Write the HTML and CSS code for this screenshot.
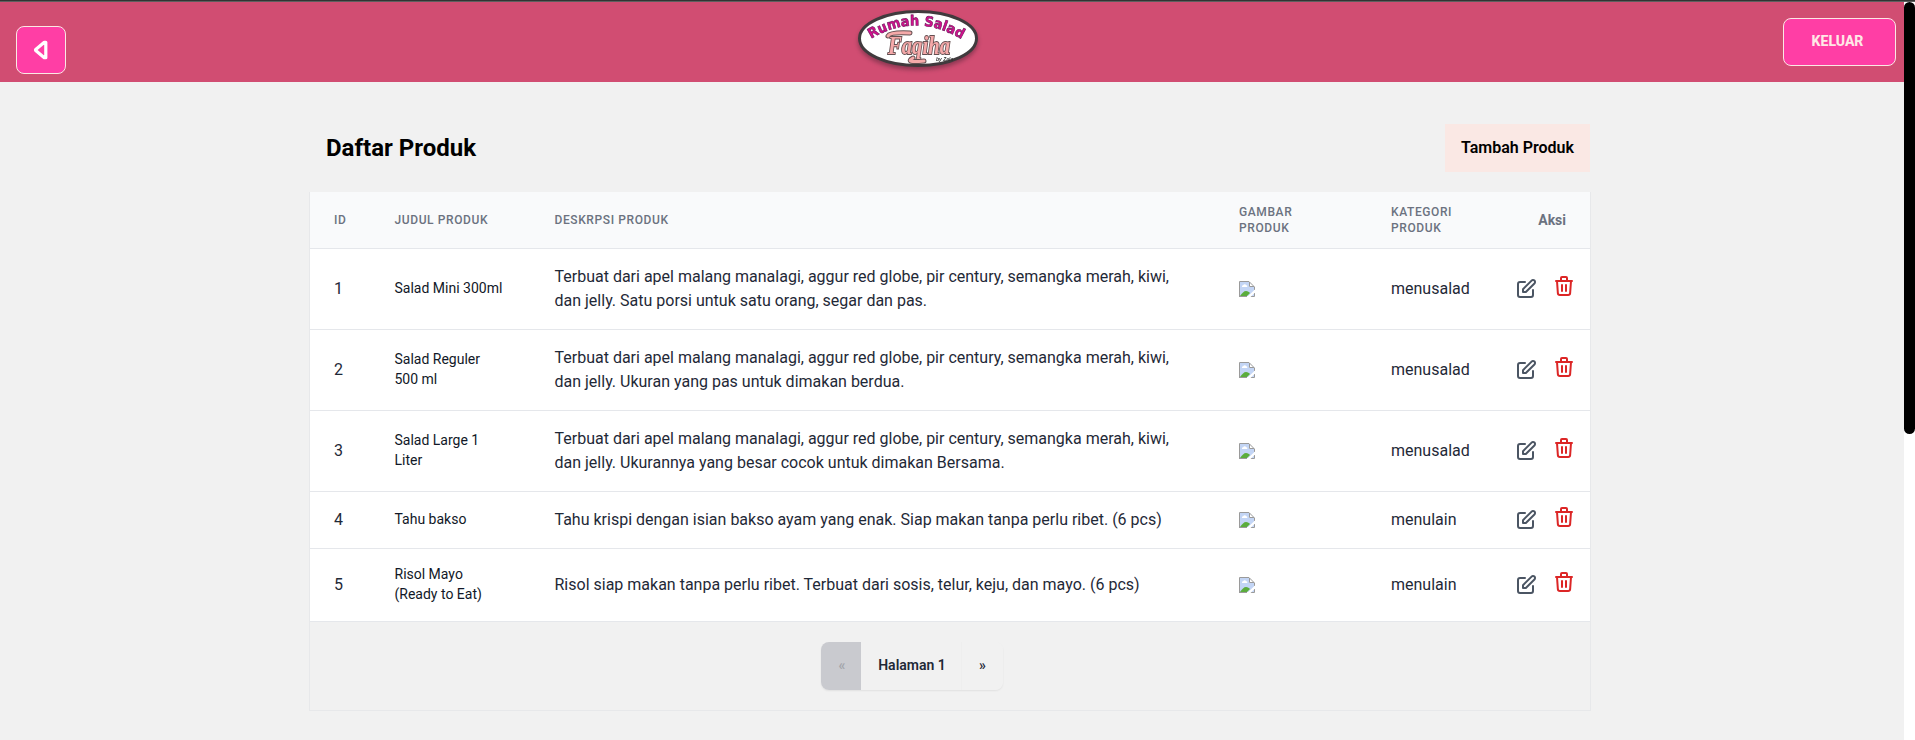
FILE: index.html
```html
<!DOCTYPE html>
<html lang="id">
<head>
<meta charset="utf-8">
<title>Daftar Produk</title>
<link rel="stylesheet" href="styles.css">
</head>
<body>
<svg class="defs" width="0" height="0" aria-hidden="true">
  <symbol id="edit" viewBox="0 0 24 24"><path fill="none" stroke="currentColor" stroke-width="2" stroke-linecap="round" stroke-linejoin="round" d="M11 5H6a2 2 0 00-2 2v11a2 2 0 002 2h11a2 2 0 002-2v-5m-1.414-9.414a2 2 0 112.828 2.828L11.828 15H9v-2.828l8.586-8.586z"/></symbol>
  <symbol id="trash" viewBox="0 0 24 24"><path fill="none" stroke="currentColor" stroke-width="2" stroke-linecap="round" stroke-linejoin="round" d="M19 7l-.867 12.142A2 2 0 0116.138 21H7.862a2 2 0 01-1.995-1.858L5 7m5 4v6m4-6v6m1-10V4a1 1 0 00-1-1h-4a1 1 0 00-1 1v3M4 7h16"/></symbol>
  <symbol id="broken" viewBox="0 0 16 16">
    <path fill="#c3d5f5" d="M1 1h9v5h5v9H1z"/>
    <path fill="#fff" d="M3 5.5a1.3 1.3 0 011.2-1.3 1.6 1.6 0 013 0A1 1 0 018 6H3z"/>
    <path fill="#5bad3c" d="M1 15c2-3 4-5 6-5s3 1 4 2l-3 3z"/>
    <path fill="#fff" d="M10 1l5 5h-5z"/>
    <path fill="none" stroke="#9a9a9a" d="M.5 16V.5H10l5.500 5.500v3M10.500 1v4.500H15M0 15.500h8M11 15.500h4.500V12"/>
    <path fill="#fff" d="M16 8.500v3L11.500 16H8z"/>
  </symbol>
</svg>
<div class="window">
  <div class="page">
    <header class="navbar">
      <button class="btn-pink back" aria-label="Kembali">
        <svg width="16" height="20" viewBox="0 0 16 20"><path fill="none" stroke="#fff" stroke-width="3.200" stroke-linejoin="round" d="M12.300 2.300 11.300 2.300 3 9.200Q2.200 10 3 10.800L11.300 17.700 12.800 17.700V2.300z"/></svg>
      </button>
      <svg class="logo" width="140" height="80" viewBox="0 0 140 80">
        <ellipse cx="70" cy="37.500" rx="58.500" ry="27" fill="#fff" stroke="#403a3d" stroke-width="3"/>
        <path id="arc" fill="none" d="M23 38Q68 10 117 40"/>
        <text class="logo-top"><textPath href="#arc" textLength="96" lengthAdjust="spacingAndGlyphs">Rumah Salad</textPath></text>
        <path d="M40 35Q42 31 62 32" class="logo-swash outline"/>
        <path d="M65 57Q56 62 76 60" class="logo-swash outline"/>
        <text class="logo-name" x="40" y="53" textLength="62" lengthAdjust="spacingAndGlyphs">Faqiha</text>
        <path d="M40 35Q42 31 62 32" class="logo-swash"/>
        <path d="M65 57Q56 62 76 60" class="logo-swash"/>
        <text class="logo-by" x="88" y="60">by Zala</text>
      </svg>
      <button class="btn-pink logout">KELUAR</button>
    </header>
    <main class="content">
      <div class="heading">
        <h1>Daftar Produk</h1>
        <button class="add">Tambah Produk</button>
      </div>
      <section class="card">
        <div class="row head">
          <div>ID</div><div>Judul Produk</div><div>Deskrpsi Produk</div><div>Gambar<br>Produk</div><div>Kategori<br>Produk</div><div class="aksi">Aksi</div>
        </div>
        <div class="row">
          <div>1</div><div class="name">Salad Mini 300ml</div>
          <div>Terbuat dari apel malang manalagi, aggur red globe, pir century, semangka merah, kiwi,<br>dan jelly. Satu porsi untuk satu orang, segar dan pas.</div>
          <div><svg class="img"><use href="#broken"/></svg></div><div>menusalad</div>
          <div class="actions"><svg class="edit"><use href="#edit"/></svg><svg class="trash"><use href="#trash"/></svg></div>
        </div>
        <div class="row">
          <div>2</div><div class="name">Salad Reguler<br>500 ml</div>
          <div>Terbuat dari apel malang manalagi, aggur red globe, pir century, semangka merah, kiwi,<br>dan jelly. Ukuran yang pas untuk dimakan berdua.</div>
          <div><svg class="img"><use href="#broken"/></svg></div><div>menusalad</div>
          <div class="actions"><svg class="edit"><use href="#edit"/></svg><svg class="trash"><use href="#trash"/></svg></div>
        </div>
        <div class="row">
          <div>3</div><div class="name">Salad Large 1<br>Liter</div>
          <div>Terbuat dari apel malang manalagi, aggur red globe, pir century, semangka merah, kiwi,<br>dan jelly. Ukurannya yang besar cocok untuk dimakan Bersama.</div>
          <div><svg class="img"><use href="#broken"/></svg></div><div>menusalad</div>
          <div class="actions"><svg class="edit"><use href="#edit"/></svg><svg class="trash"><use href="#trash"/></svg></div>
        </div>
        <div class="row">
          <div>4</div><div class="name">Tahu bakso</div>
          <div>Tahu krispi dengan isian bakso ayam yang enak. Siap makan tanpa perlu ribet. (6 pcs)</div>
          <div><svg class="img"><use href="#broken"/></svg></div><div>menulain</div>
          <div class="actions"><svg class="edit"><use href="#edit"/></svg><svg class="trash"><use href="#trash"/></svg></div>
        </div>
        <div class="row">
          <div>5</div><div class="name">Risol Mayo<br>(Ready to Eat)</div>
          <div>Risol siap makan tanpa perlu ribet. Terbuat dari sosis, telur, keju, dan mayo. (6 pcs)</div>
          <div><svg class="img"><use href="#broken"/></svg></div><div>menulain</div>
          <div class="actions"><svg class="edit"><use href="#edit"/></svg><svg class="trash"><use href="#trash"/></svg></div>
        </div>
        <div class="footer">
          <div class="pager"><button class="prev">«</button><button class="current">Halaman 1</button><button class="next">»</button></div>
        </div>
      </section>
    </main>
  </div>
  <div class="scrollbar"><div class="thumb"></div></div>
</div>
</body>
</html>
```
FILE: styles.css
```css
* { box-sizing: border-box; }
body {
  margin: 0;
  background: #f1f1f1;
  font: 16px/24px Roboto, sans-serif;
  color: #1f2937;
  overflow: hidden;
}
.defs { position: absolute; }
button { font-family: inherit; padding: 0; border: 0; }
.window {
  display: flex;
  height: 740px;
  border-top: 1px solid #333;
}
.page { width: 1904px; border-top: 1px solid #5e5e5e; }
.scrollbar {
  width: 11px;
  background: #fff;
  border-top: 1px solid #5e5e5e;
}
.thumb { height: 432px; border-radius: 5.5px; background: #000; }

.navbar {
  display: grid;
  grid-template-columns: 50px 140px 113px;
  column-gap: 782px;
  height: 80px;
  padding: 0 8px 0 16px;
  background: #d14d72;
}
.btn-pink {
  height: 48px;
  border: 1px solid #fbe8e4;
  border-radius: 8px;
  background: #ff3ea5;
  color: #ffe8e6;
  font-size: 14px;
  font-weight: 800;
  line-height: 14px;
}
.back {
  display: flex;
  align-items: center;
  justify-content: center;
  width: 50px;
  margin-top: 24px;
  padding-right: 1px;
}
.logo {
  margin-top: -1px;
  filter: drop-shadow(0 3px 2px rgba(60, 30, 45, .45));
}
.logo-top {
  font: 700 14px "DejaVu Sans", sans-serif;
  fill: #d2108c;
  stroke: #651457;
  stroke-width: .6px;
}
.logo-name {
  font: italic 700 25px "Liberation Serif", serif;
  fill: #f5a9a9;
  stroke: #655052;
  stroke-width: 2px;
  paint-order: stroke;
}
.logo-swash {
  fill: none;
  stroke: #f5a9a9;
  stroke-width: 3px;
  stroke-linecap: round;
}
.logo-swash.outline { stroke: #655052; stroke-width: 5px; }
.logo-by { font: italic 700 5px "Liberation Sans", sans-serif; fill: #333; }
.logout { width: 113px; margin: 16px 0 0 13px; padding: 0 4px 2px 0; }

.content { width: 1280px; margin: 0 0 0 310px; padding-top: 42px; }
.heading {
  display: flex;
  align-items: center;
  justify-content: space-between;
  height: 48px;
  margin-bottom: 20px;
  padding-left: 16px;
}
h1 { margin: 0; font-size: 24px; line-height: 32px; font-weight: 700; color: #000; }
.add {
  width: 145px;
  height: 48px;
  padding-bottom: 2px;
  background: #fae8e4;
  color: #000;
  font-size: 16px;
  font-weight: 600;
}
.card {
  box-shadow: -1px 0 0 #e7e8ea, 1px 0 0 #e7e8ea;
}
.row {
  display: grid;
  grid-template-columns: 60.500px 160px 684.500px 152px 125px 98px;
  align-items: center;
  padding: 16px 0;
  background: #fff;
  border-bottom: 1px solid #e5e7eb;
}
.row > div { padding-left: 24px; white-space: nowrap; }
.row:not(.head) { min-height: 57px; }
.row .name { padding-bottom: 2px; font-size: 14px; line-height: 20px; color: #111827; }
.row:nth-child(6) { height: 73px; }
.row:nth-child(6) .name { margin: -1px 0; }
.row.head {
  height: 57px;
  padding: 0;
  background: #f9fafb;
  color: #6b7280;
  font-size: 12px;
  line-height: 16px;
  font-weight: 500;
  letter-spacing: .6px;
  text-transform: uppercase;
}
.row .aksi {
  padding: 0 24px 1px 0;
  font-size: 14px;
  font-weight: 700;
  letter-spacing: 0;
  text-align: right;
  text-transform: none;
}
.img { display: block; width: 16px; height: 16px; }
.row .actions { display: flex; align-items: center; gap: 14px; height: 24px; padding-left: 22px; }
.edit, .trash { flex: none; width: 24px; height: 24px; }
.edit { color: #4b5563; }
.trash { color: #dc2626; margin-bottom: 6px; }
.row:nth-child(2), .row:nth-child(3), .row:nth-child(4) { height: 81px; }

.footer {
  height: 89px;
  padding: 20px 76px 0 0;
  background: #f1f1f1;
  border-bottom: 1px solid #e7e8ea;
}
.pager {
  display: flex;
  width: 182px;
  height: 48px;
  margin: 0 auto;
  border-radius: 8px;
  overflow: hidden;
  box-shadow: 0 1px 2px rgba(0, 0, 0, .07);
}
.pager button {
  padding-bottom: 2px;
  background: #f1f1f1;
  color: #1f2937;
  font-size: 14px;
  font-weight: 600;
}
.pager .prev { width: 40px; padding-left: 2px; background: #c9cacf; color: #a2a4aa; }
.pager .current { width: 100px; padding-left: 2px; }
.pager .next { width: 42px; border-left: 1px solid #eee; }
```
